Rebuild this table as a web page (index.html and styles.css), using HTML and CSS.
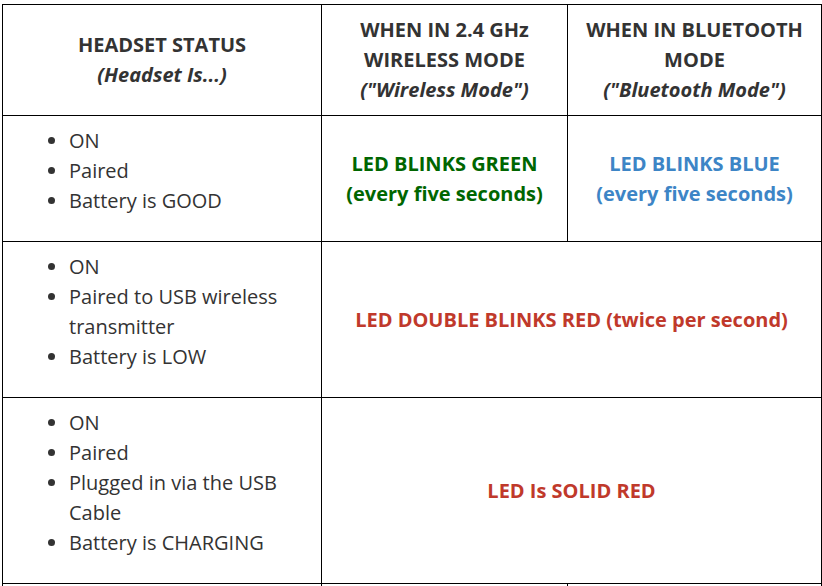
FILE: index.html
```html
<!DOCTYPE html>
<html lang="en">
<head>
<meta charset="utf-8">
<title>Headset LED Status</title>
<link rel="stylesheet" href="styles.css">
</head>
<body>
<table class="status-table">
  <colgroup>
    <col class="col-status">
    <col class="col-wireless">
    <col class="col-bt">
  </colgroup>
  <thead>
    <tr>
      <th>HEADSET STATUS<br><em>(Headset Is...)</em></th>
      <th>WHEN IN 2.4 GHz WIRELESS MODE<br><em>("Wireless Mode")</em></th>
      <th>WHEN IN BLUETOOTH MODE<br><em>("Bluetooth Mode")</em></th>
    </tr>
  </thead>
  <tbody>
    <tr>
      <td>
        <ul class="status-list">
          <li>ON</li>
          <li>Paired</li>
          <li>Battery is GOOD</li>
        </ul>
      </td>
      <td class="led led-green">LED BLINKS GREEN<br>(every five seconds)</td>
      <td class="led led-blue">LED BLINKS BLUE<br>(every five seconds)</td>
    </tr>
    <tr>
      <td>
        <ul class="status-list">
          <li>ON</li>
          <li>Paired to USB wireless transmitter</li>
          <li>Battery is LOW</li>
        </ul>
      </td>
      <td class="led led-red" colspan="2">LED DOUBLE BLINKS RED (twice per second)</td>
    </tr>
    <tr>
      <td>
        <ul class="status-list">
          <li>ON</li>
          <li>Paired</li>
          <li>Plugged in via the USB Cable</li>
          <li>Battery is CHARGING</li>
        </ul>
      </td>
      <td class="led led-red" colspan="2">LED Is SOLID RED</td>
    </tr>
    <tr class="row-next">
      <td></td>
      <td></td>
      <td></td>
    </tr>
  </tbody>
</table>
</body>
</html>
```

FILE: styles.css
```css
html, body {
  overflow: hidden;
}
body {
  margin: 0;
  padding: 4px 0 0 2px;
  background: #fff;
  font-family: "Open Sans", "Liberation Sans", sans-serif;
  font-size: 20px;
  line-height: 30px;
  color: #333;
}
.status-table {
  border-collapse: collapse;
  table-layout: fixed;
  width: 819px;
}
.col-status { width: 319px; }
.col-wireless { width: 246px; }
.col-bt { width: 254px; }
.status-table th,
.status-table td {
  border: 1px solid #000;
  padding: 10px;
  vertical-align: middle;
}
.status-table th {
  font-weight: 700;
  text-align: center;
}
.status-table th em {
  font-style: italic;
}
.status-list {
  margin: 0 0 15px 0;
  padding-left: 56px;
}
.row-next td {
  height: 60px;
}
.led {
  text-align: center;
  font-weight: 700;
}
.led-green { color: #006600; }
.led-blue { color: #3d85c6; }
.led-red { color: #c0392b; }
```
